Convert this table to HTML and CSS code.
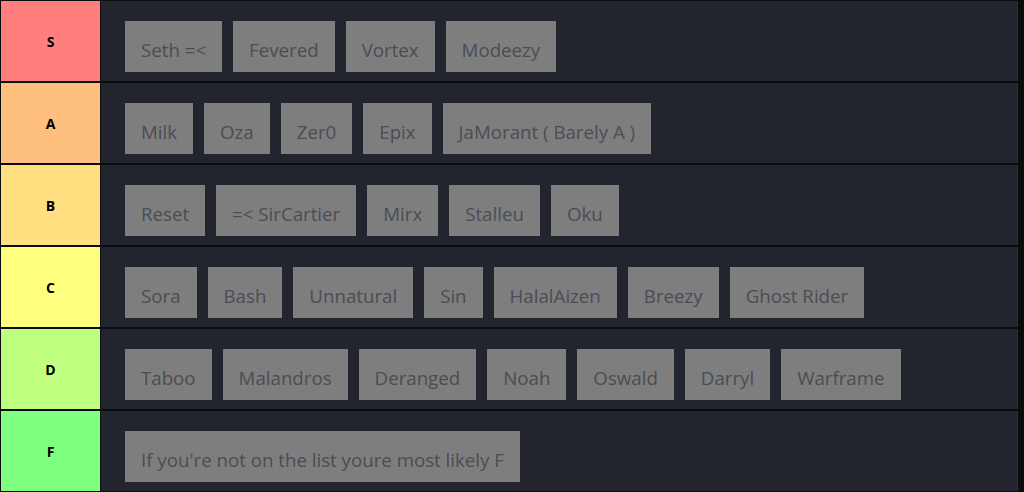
FILE: index.html
```html
<!DOCTYPE html>
<html lang="en">
<head>
<meta charset="utf-8">
<title>Tier list</title>
<link rel="stylesheet" href="styles.css">
</head>
<body>
<div class="tiers">
  <div class="row">
    <div class="label tier-s">S</div>
    <div class="items">
      <div class="chip">Seth =&lt;</div>
      <div class="chip">Fevered</div>
      <div class="chip">Vortex</div>
      <div class="chip">Modeezy</div>
    </div>
  </div>
  <div class="row">
    <div class="label tier-a">A</div>
    <div class="items">
      <div class="chip">Milk</div>
      <div class="chip">Oza</div>
      <div class="chip">Zer0</div>
      <div class="chip">Epix</div>
      <div class="chip">JaMorant ( Barely A )</div>
    </div>
  </div>
  <div class="row">
    <div class="label tier-b">B</div>
    <div class="items">
      <div class="chip">Reset</div>
      <div class="chip">=&lt; SirCartier</div>
      <div class="chip">Mirx</div>
      <div class="chip">Stalleu</div>
      <div class="chip">Oku</div>
    </div>
  </div>
  <div class="row">
    <div class="label tier-c">C</div>
    <div class="items">
      <div class="chip">Sora</div>
      <div class="chip">Bash</div>
      <div class="chip">Unnatural</div>
      <div class="chip">Sin</div>
      <div class="chip">HalalAizen</div>
      <div class="chip">Breezy</div>
      <div class="chip">Ghost Rider</div>
    </div>
  </div>
  <div class="row">
    <div class="label tier-d">D</div>
    <div class="items">
      <div class="chip">Taboo</div>
      <div class="chip">Malandros</div>
      <div class="chip">Deranged</div>
      <div class="chip">Noah</div>
      <div class="chip">Oswald</div>
      <div class="chip">Darryl</div>
      <div class="chip">Warframe</div>
    </div>
  </div>
  <div class="row">
    <div class="label tier-f">F</div>
    <div class="items">
      <div class="chip">If you're not on the list youre most likely F</div>
    </div>
  </div>
</div>
</body>
</html>
```
FILE: styles.css
```css
html, body {
  margin: 0;
  padding: 0;
  background: #0b0c0e;
  height: 492px;
  overflow: hidden;
}
.tiers {
  display: flex;
  flex-direction: column;
  gap: 2px;
  padding: 1px 0 1px 1px;
  width: 1017px;
}
.row {
  display: flex;
  height: 80px;
}
.label {
  width: 99px;
  flex: none;
  display: flex;
  align-items: center;
  justify-content: center;
  font-family: "Open Sans", "Noto Sans", sans-serif;
  font-weight: 700;
  font-size: 14px;
  color: #000;
}
.tier-s { background: #ff7f7f; }
.tier-a { background: #ffbf7f; }
.tier-b { background: #ffdf7f; }
.tier-c { background: #ffff7f; }
.tier-d { background: #bfff7f; }
.tier-f { background: #7fff7f; }
.items {
  flex: 1;
  margin-left: 1px;
  background: #22252d;
  display: flex;
  align-items: flex-start;
  gap: 11px;
  padding: 20px 24px 0 24px;
  border-right: 1px solid #2c2f36;
}
.chip {
  height: 51px;
  box-sizing: border-box;
  padding: 14px 16px 0 16px;
  background: #7e7e7e;
  color: #4a4d55;
  font-family: "Open Sans", "Noto Sans", sans-serif;
  font-size: 18.7px;
  line-height: 30px;
  white-space: nowrap;
}
```
